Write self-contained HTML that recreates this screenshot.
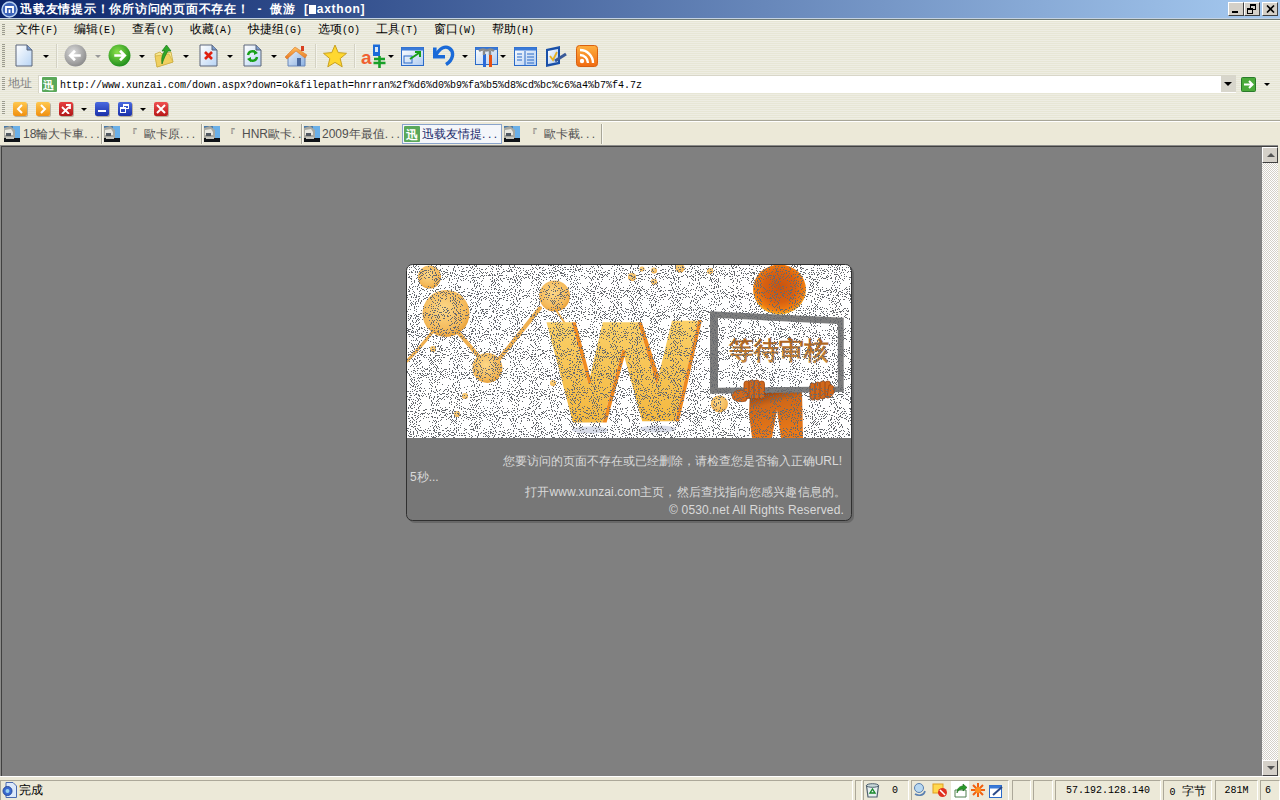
<!DOCTYPE html>
<html><head><meta charset="utf-8">
<style>
*{margin:0;padding:0;box-sizing:border-box}
html,body{width:1280px;height:800px;overflow:hidden;background:#808080;font-family:"Liberation Sans",sans-serif;font-size:12px}
.a{position:absolute}
svg{display:block}
#title{left:0;top:0;width:1280px;height:18px;background:linear-gradient(90deg,#0a246a 0%,#a6caf0 100%)}
#ttxt{left:20px;top:2px;color:#fff;font-weight:bold;font-size:12px;line-height:14px;white-space:nowrap;letter-spacing:0.75px;word-spacing:4px}
.wb{top:2px;width:16px;height:14px;background:#d4d0c8;border-top:1px solid #fff;border-left:1px solid #fff;border-right:1px solid #404040;border-bottom:1px solid #404040}
#bars{left:0;top:18px;width:1280px;height:103px;background:repeating-linear-gradient(180deg,#e7e6d5 0px,#e7e6d5 1px,#eeede3 1px,#eeede3 2px)}
.m{top:22px;font-size:12px;line-height:15px;color:#000;white-space:nowrap}
.m span{font-family:"Liberation Mono",monospace;font-size:10px}
.grip{left:2px;width:3px;background:repeating-linear-gradient(180deg,#9c9c90 0,#9c9c90 1px,transparent 1px,transparent 2px)}
.dd{width:0;height:0;border-left:3px solid transparent;border-right:3px solid transparent;border-top:3px solid #000}
.vsep{width:2px;background:linear-gradient(90deg,#d4d2c4 50%,#f4f4ec 50%)}
#tabs{left:0;top:120px;width:1280px;height:25px;background:#ece9d8;border-top:1px solid #a8a698}
#tabs2{left:0;top:121px;width:1280px;height:1px;background:#fff}
.tab{top:125px;height:18px;font-size:12px;line-height:18px;color:#505050;white-space:nowrap}
.tico{top:126px;width:16px;height:16px}
.tsep{top:124px;width:2px;height:20px;border-left:1px solid #a8a698;border-right:1px solid #f8f8f0}
#content{left:0;top:145px;width:1280px;height:631px;background:#808080;border-top:1px solid #404040;border-left:1px solid #404040}
#status{left:0;top:776px;width:1280px;height:24px;background:#ece9d8;border-top:1px solid #fff}
.sp{top:780px;height:20px;border-top:1px solid #aca899;border-left:1px solid #aca899;border-right:1px solid #fff;font-size:12px;line-height:20px;color:#000;text-align:center;white-space:nowrap}
#addr{left:38px;top:75px;width:1198px;height:18px;background:#fff;border-top:1px solid #d8d6c8;border-left:1px solid #d8d6c8}
#url{left:60px;top:79px;font-family:"Liberation Mono",monospace;font-size:10px;line-height:14px;color:#000;white-space:nowrap}
.dt{font-size:12px;line-height:15px;color:#dadada;white-space:nowrap}
</style></head><body>
<svg width="0" height="0" style="position:absolute"><defs><linearGradient id="wf" x1="0" y1="0" x2="1" y2="1"><stop offset="0" stop-color="#ffffff"/><stop offset="1" stop-color="#b0ccf0"/></linearGradient></defs></svg>
<div id="title" class="a"></div>
<svg class="a" style="left:1px;top:1px" width="17" height="17" viewBox="0 0 17 17"><circle cx="8.5" cy="8.5" r="7.5" fill="#3a62b8" stroke="#b8d0f0" stroke-width="1.5"/><path d="M5 12V6h7v6M8.5 12V8.5" fill="none" stroke="#fff" stroke-width="1.8"/></svg>
<div id="ttxt" class="a">迅载友情提示！你所访问的页面不存在！ - 傲游 [<span style="display:inline-block;width:7px;height:9px;background:#fff;vertical-align:-1px;margin-right:1px"></span>axthon]</div>
<div class="a wb" style="left:1228px"><div class="a" style="left:3px;top:8px;width:6px;height:2px;background:#000"></div></div>
<div class="a wb" style="left:1244px"><div class="a" style="left:5px;top:1px;width:6px;height:6px;border:1px solid #000;border-top-width:2px"></div><div class="a" style="left:2px;top:5px;width:6px;height:6px;border:1px solid #000;border-top-width:2px;background:#d4d0c8"></div></div>
<div class="a wb" style="left:1262px"><svg class="a" style="left:3px;top:2px" width="9" height="8"><path d="M1 0.5L8 7.5M8 0.5L1 7.5" stroke="#000" stroke-width="1.6"/></svg></div>
<div class="a" style="left:0;top:18px;width:1280px;height:1px;background:#c4d2e2"></div>
<div class="a" style="left:0;top:19px;width:1280px;height:1px;background:#707c76"></div>
<div id="bars" class="a" style="top:20px;height:100px;border-top:1px solid #fafaf0"></div>

<!-- menu -->
<div class="a grip" style="top:24px;height:12px"></div>
<div class="a m" style="left:16px">文件<span>(F)</span></div>
<div class="a m" style="left:74px">编辑<span>(E)</span></div>
<div class="a m" style="left:132px">查看<span>(V)</span></div>
<div class="a m" style="left:190px">收藏<span>(A)</span></div>
<div class="a m" style="left:248px">快捷组<span>(G)</span></div>
<div class="a m" style="left:318px">选项<span>(O)</span></div>
<div class="a m" style="left:376px">工具<span>(T)</span></div>
<div class="a m" style="left:434px">窗口<span>(W)</span></div>
<div class="a m" style="left:492px">帮助<span>(H)</span></div>

<!-- toolbar -->
<div class="a grip" style="top:44px;height:24px"></div>
<svg class="a" style="left:15px;top:44px" width="18" height="23" viewBox="0 0 18 23"><defs><linearGradient id="pg" x1="0" y1="0" x2="1" y2="1"><stop offset="0" stop-color="#fff"/><stop offset="1" stop-color="#b8d4f4"/></linearGradient></defs><path d="M1 1H12L17 6V22H1Z" fill="url(#pg)" stroke="#5a6478" stroke-width="1"/><path d="M12 1V6H17" fill="#7a9acc" stroke="#5a6478"/></svg>
<div class="a dd" style="left:43px;top:55px"></div>
<div class="a vsep" style="left:56px;top:44px;height:24px"></div>
<svg class="a" style="left:64px;top:44px" width="23" height="23" viewBox="0 0 22 22"><defs><radialGradient id="gb" cx="0.4" cy="0.35" r="0.7"><stop offset="0" stop-color="#dcdcdc"/><stop offset="1" stop-color="#888"/></radialGradient></defs><circle cx="11" cy="11" r="10.5" fill="url(#gb)"/><path d="M16 11H7M10.5 6.5L6 11L10.5 15.5" fill="none" stroke="#fff" stroke-width="2.6"/></svg>
<div class="a dd" style="left:95px;top:55px;border-top-color:#999"></div>
<svg class="a" style="left:108px;top:44px" width="23" height="23" viewBox="0 0 22 22"><defs><radialGradient id="gg" cx="0.4" cy="0.35" r="0.7"><stop offset="0" stop-color="#8ae04a"/><stop offset="1" stop-color="#1a8a1a"/></radialGradient></defs><circle cx="11" cy="11" r="10.5" fill="url(#gg)"/><path d="M6 11H15M11.5 6.5L16 11L11.5 15.5" fill="none" stroke="#fff" stroke-width="2.6"/></svg>
<div class="a dd" style="left:139px;top:55px"></div>
<svg class="a" style="left:154px;top:44px" width="20" height="24" viewBox="0 0 20 24"><path d="M1 10L6 8L8 10L17 8L19 18L3 23Z" fill="#f8e890" stroke="#c8a83a" stroke-width="0.8"/><path d="M3 23L1 12L15 10L19 18Z" fill="#f0d060" stroke="#c8a83a" stroke-width="0.6"/><path d="M8 20C7 13 9 9 11 7H8L12.5 1L17 7H14C12 10 10 14 8 20Z" fill="#30a828" stroke="#187818" stroke-width="0.7"/></svg>
<div class="a dd" style="left:183px;top:55px"></div>
<svg class="a" style="left:199px;top:44px" width="19" height="23" viewBox="0 0 19 23"><path d="M1 1H13L18 6V22H1Z" fill="url(#pg)" stroke="#5a6478"/><path d="M13 1V6H18" fill="#7a9acc" stroke="#5a6478"/><path d="M6 8L13 15M13 8L6 15" stroke="#e02010" stroke-width="2.6"/></svg>
<div class="a dd" style="left:227px;top:55px"></div>
<svg class="a" style="left:243px;top:44px" width="19" height="23" viewBox="0 0 19 23"><path d="M1 1H13L18 6V22H1Z" fill="url(#pg)" stroke="#5a6478"/><path d="M13 1V6H18" fill="#7a9acc" stroke="#5a6478"/><path d="M5 11A4.5 4.5 0 0 1 13 9M14 13A4.5 4.5 0 0 1 6 15" fill="none" stroke="#18a018" stroke-width="2.4"/><path d="M11 6L15 9L11 11Z M8 13L4 15L8 18Z" fill="#18a018"/></svg>
<div class="a dd" style="left:271px;top:55px"></div>
<svg class="a" style="left:284px;top:44px" width="24" height="24" viewBox="0 0 24 24"><defs><linearGradient id="hb" x1="0" y1="0" x2="1" y2="1"><stop offset="0" stop-color="#eef4fc"/><stop offset="1" stop-color="#8ab0e0"/></linearGradient><linearGradient id="hr" x1="0" y1="0" x2="0" y2="1"><stop offset="0" stop-color="#ffc060"/><stop offset="1" stop-color="#e87820"/></linearGradient></defs><path d="M4 12L13 5L21 12V22H4Z" fill="url(#hb)" stroke="#6a88b8"/><path d="M1 13L11 3L23 11L21 14L12 7L3 15Z" fill="url(#hr)" stroke="#d8782a" stroke-width="0.6"/><rect x="17" y="2" width="3" height="5" fill="#d84020"/><rect x="13" y="14" width="4" height="8" fill="#4a6aa0"/></svg>
<div class="a vsep" style="left:315px;top:44px;height:24px"></div>
<svg class="a" style="left:322px;top:44px" width="26" height="24" viewBox="0 0 26 24"><path d="M13 1L16.2 8.6L24.5 9.3L18.2 14.6L20.2 22.8L13 18.4L5.8 22.8L7.8 14.6L1.5 9.3L9.8 8.6Z" fill="#ffd830" stroke="#c8a020" stroke-width="1"/></svg>
<div class="a vsep" style="left:354px;top:44px;height:24px"></div>
<svg class="a" style="left:361px;top:44px" width="25" height="25" viewBox="0 0 25 25"><path d="M12 0.5H19V12H12Z" fill="#1a6ad8"/><rect x="14" y="3" width="3" height="5" fill="#d8e8f8"/><text x="0" y="20" font-family="Liberation Sans" font-weight="bold" font-size="19" fill="#f06030">a</text><path d="M13 15H24M18.5 12V24M12.5 19H24.5" stroke="#18a028" stroke-width="2.6"/></svg>
<div class="a dd" style="left:388px;top:55px"></div>
<svg class="a" style="left:401px;top:47px" width="23" height="19" viewBox="0 0 23 19"><rect x="0.5" y="0.5" width="22" height="18" fill="url(#wf)" stroke="#2a6ac8"/><rect x="0.5" y="0.5" width="22" height="3" fill="#3a7ad8"/><rect x="3" y="9" width="8" height="7" fill="none" stroke="#2a6ac8"/><path d="M9 12L18 6M14 5H19V10" fill="none" stroke="#18a018" stroke-width="2"/></svg>
<svg class="a" style="left:432px;top:45px" width="23" height="22" viewBox="0 0 23 22"><path d="M4 10C8 3 13 1 17 3C23 7 21 15 14 19.5" fill="none" stroke="#1a6ad8" stroke-width="3.4"/><path d="M1 2.5H4.6V10H13V13.5H1Z" fill="#1a6ad8"/></svg>
<div class="a dd" style="left:462px;top:55px"></div>
<svg class="a" style="left:475px;top:46px" width="23" height="21" viewBox="0 0 23 21"><rect x="0.5" y="1.5" width="22" height="17" fill="url(#wf)" stroke="#2a6ac8"/><rect x="0.5" y="1.5" width="22" height="2.5" fill="#3a7ad8"/><rect x="8" y="8" width="3" height="13" fill="#2a6ad8"/><rect x="14" y="9" width="3" height="12" fill="#e85010"/><path d="M4 5Q8 2 12 5M12 5Q15 2 19 5" stroke="#8a8a8a" stroke-width="2.4" fill="none"/><path d="M9 5V9M15 5V9" stroke="#8a8a8a" stroke-width="2.4"/></svg>
<div class="a dd" style="left:500px;top:55px"></div>
<svg class="a" style="left:514px;top:47px" width="23" height="19" viewBox="0 0 23 19"><rect x="0.5" y="0.5" width="22" height="18" fill="url(#wf)" stroke="#2a6ac8"/><rect x="0.5" y="0.5" width="22" height="3" fill="#3a7ad8"/><path d="M11 4V18" stroke="#2a6ac8"/><path d="M3 7H8M3 10H8M3 13H8M13 7H20M13 10H20M13 13H20M13 16H20" stroke="#2a6ac8" stroke-width="1.2"/></svg>
<svg class="a" style="left:545px;top:44px" width="23" height="24" viewBox="0 0 23 24"><path d="M1 5L15 2V20L1 23Z" fill="#1a50a8"/><path d="M3 7L13 5V18L3 20Z" fill="url(#wf)"/><path d="M5 12L8 16L12 8" fill="none" stroke="#e8b020" stroke-width="1.8"/><path d="M10 17L21 10" stroke="#3a5a98" stroke-width="3"/></svg>
<svg class="a" style="left:576px;top:45px" width="22" height="22" viewBox="0 0 22 22"><defs><linearGradient id="rs" x1="0" y1="0" x2="0" y2="1"><stop offset="0" stop-color="#ffb040"/><stop offset="1" stop-color="#f06a10"/></linearGradient></defs><rect x="0.5" y="0.5" width="21" height="21" rx="3" fill="url(#rs)" stroke="#d86010"/><circle cx="6" cy="16" r="2.2" fill="#fff"/><path d="M4 10A8 8 0 0 1 12 18M4 5A13 13 0 0 1 17 18" fill="none" stroke="#fff" stroke-width="2.4"/></svg>

<!-- address bar -->
<div class="a grip" style="top:77px;height:14px"></div>
<div class="a" style="left:8px;top:76px;font-size:12px;line-height:15px;color:#808080">地址</div>
<div id="addr" class="a"></div>
<div class="a" style="left:1221px;top:76px;width:15px;height:16px;background:#d8d6cc"><div class="a dd" style="left:3px;top:6px;border-left-width:4px;border-right-width:4px;border-top-width:4px"></div></div>
<svg class="a" style="left:42px;top:77px" width="15" height="15" viewBox="0 0 15 15"><rect width="15" height="15" rx="1" fill="#5aa85a"/><text x="1" y="12" font-size="11" font-weight="bold" fill="#fff">迅</text></svg>
<div id="url" class="a">http://www.xunzai.com/down.aspx?down=ok&amp;filepath=hnrran%2f%d6%d0%b9%fa%b5%d8%cd%bc%c6%a4%b7%f4.7z</div>
<svg class="a" style="left:1241px;top:77px" width="15" height="15" viewBox="0 0 15 15"><rect x="0.5" y="0.5" width="14" height="14" rx="1" fill="#4aaa3a" stroke="#2a7a2a"/><path d="M3 7.5H11M8 4L11.5 7.5L8 11" fill="none" stroke="#fff" stroke-width="2"/></svg>
<div class="a dd" style="left:1264px;top:83px"></div>

<!-- toolbar 2 -->
<div class="a grip" style="top:101px;height:14px"></div>
<div class="a" style="left:13px;top:102px;width:14px;height:14px;background:linear-gradient(#ffc850,#f09010);border-radius:2px;box-shadow:1px 1px 0 #b8b0a0"><svg class="a" style="left:3px;top:2px" width="8" height="10"><path d="M6 1L2 5L6 9" fill="none" stroke="#fff" stroke-width="2"/></svg></div>
<div class="a" style="left:36px;top:102px;width:14px;height:14px;background:linear-gradient(#ffc850,#f09010);border-radius:2px;box-shadow:1px 1px 0 #b8b0a0"><svg class="a" style="left:3px;top:2px" width="8" height="10"><path d="M2 1L6 5L2 9" fill="none" stroke="#fff" stroke-width="2"/></svg></div>
<div class="a" style="left:59px;top:102px;width:14px;height:14px;background:linear-gradient(#e84040,#b01818);border-radius:2px;box-shadow:1px 1px 0 #b8b0a0"><svg class="a" style="left:2px;top:2px" width="10" height="10"><path d="M1 3L8 10M8 3L1 10M5 1H9V5" fill="none" stroke="#fff" stroke-width="1.8"/></svg></div>
<div class="a dd" style="left:81px;top:108px"></div>
<div class="a" style="left:95px;top:102px;width:14px;height:14px;background:linear-gradient(#4a6ae0,#1a30a8);border-radius:2px;box-shadow:1px 1px 0 #b8b0a0"><div class="a" style="left:3px;top:8px;width:8px;height:2px;background:#fff"></div></div>
<div class="a" style="left:118px;top:102px;width:14px;height:14px;background:linear-gradient(#4a6ae0,#1a30a8);border-radius:2px;box-shadow:1px 1px 0 #b8b0a0"><div class="a" style="left:5px;top:2px;width:6px;height:5px;border:1px solid #fff;border-top-width:2px"></div><div class="a" style="left:2px;top:5px;width:6px;height:6px;border:1px solid #fff;border-top-width:2px"></div></div>
<div class="a dd" style="left:140px;top:108px"></div>
<div class="a" style="left:154px;top:102px;width:14px;height:14px;background:linear-gradient(#f05050,#b81818);border-radius:2px;box-shadow:1px 1px 0 #b8b0a0"><svg class="a" style="left:2px;top:2px" width="10" height="10"><path d="M1 1L9 9M9 1L1 9" stroke="#fff" stroke-width="2"/></svg></div>

<!-- tabs -->
<div id="tabs" class="a"></div>
<div id="tabs2" class="a"></div>
<svg class="a tico" style="left:4px" width="16" height="16" viewBox="0 0 16 16"><defs></defs><rect width="16" height="16" fill="#4a7aa8"/><rect x="9" y="0" width="7" height="12" fill="#6ab0e8"/><path d="M0 2L6 0L11 4V12H0Z" fill="#a8a8a0"/><path d="M1 4L7 3L9 6V9H1Z" fill="#e8e8e0"/><rect x="2" y="7" width="5" height="3" fill="#505860"/><rect x="0" y="12" width="16" height="4" fill="#101418"/><rect x="2" y="11" width="8" height="2" fill="#c8c8c0"/></svg>
<div class="a tab" style="left:23px">18輪大卡車<span style="letter-spacing:2.6px">...</span></div>
<svg class="a tico" style="left:104px" width="16" height="16" viewBox="0 0 16 16"><defs></defs><rect width="16" height="16" fill="#4a7aa8"/><rect x="9" y="0" width="7" height="12" fill="#6ab0e8"/><path d="M0 2L6 0L11 4V12H0Z" fill="#a8a8a0"/><path d="M1 4L7 3L9 6V9H1Z" fill="#e8e8e0"/><rect x="2" y="7" width="5" height="3" fill="#505860"/><rect x="0" y="12" width="16" height="4" fill="#101418"/><rect x="2" y="11" width="8" height="2" fill="#c8c8c0"/></svg>
<div class="a tab" style="left:126px">『<span style="margin-left:6px"></span>歐卡原<span style="letter-spacing:2.6px">...</span></div>
<svg class="a tico" style="left:204px" width="16" height="16" viewBox="0 0 16 16"><defs></defs><rect width="16" height="16" fill="#4a7aa8"/><rect x="9" y="0" width="7" height="12" fill="#6ab0e8"/><path d="M0 2L6 0L11 4V12H0Z" fill="#a8a8a0"/><path d="M1 4L7 3L9 6V9H1Z" fill="#e8e8e0"/><rect x="2" y="7" width="5" height="3" fill="#505860"/><rect x="0" y="12" width="16" height="4" fill="#101418"/><rect x="2" y="11" width="8" height="2" fill="#c8c8c0"/></svg>
<div class="a tab" style="left:224px">『<span style="margin-left:6px"></span>HNR歐卡<span style="letter-spacing:2.6px">...</span></div>
<svg class="a tico" style="left:304px" width="16" height="16" viewBox="0 0 16 16"><defs></defs><rect width="16" height="16" fill="#4a7aa8"/><rect x="9" y="0" width="7" height="12" fill="#6ab0e8"/><path d="M0 2L6 0L11 4V12H0Z" fill="#a8a8a0"/><path d="M1 4L7 3L9 6V9H1Z" fill="#e8e8e0"/><rect x="2" y="7" width="5" height="3" fill="#505860"/><rect x="0" y="12" width="16" height="4" fill="#101418"/><rect x="2" y="11" width="8" height="2" fill="#c8c8c0"/></svg>
<div class="a tab" style="left:322px">2009年最值<span style="letter-spacing:2.6px">...</span></div>
<div class="a" style="left:402px;top:124px;width:100px;height:20px;background:#f4f6fa;border:1px solid #8aa4cc"></div>
<svg class="a tico" style="left:404px" width="16" height="16" viewBox="0 0 16 16"><rect width="16" height="16" rx="1" fill="#5aa85a"/><text x="2" y="13" font-size="12" font-weight="bold" fill="#fff">迅</text></svg>
<div class="a tab" style="left:422px;color:#1a2a6a">迅载友情提<span style="letter-spacing:2.6px">...</span></div>
<svg class="a tico" style="left:504px" width="16" height="16" viewBox="0 0 16 16"><defs></defs><rect width="16" height="16" fill="#4a7aa8"/><rect x="9" y="0" width="7" height="12" fill="#6ab0e8"/><path d="M0 2L6 0L11 4V12H0Z" fill="#a8a8a0"/><path d="M1 4L7 3L9 6V9H1Z" fill="#e8e8e0"/><rect x="2" y="7" width="5" height="3" fill="#505860"/><rect x="0" y="12" width="16" height="4" fill="#101418"/><rect x="2" y="11" width="8" height="2" fill="#c8c8c0"/></svg>
<div class="a tab" style="left:526px">『<span style="margin-left:6px"></span>歐卡截<span style="letter-spacing:2.6px">...</span></div>
<div class="a tsep" style="left:101px"></div>
<div class="a tsep" style="left:201px"></div>
<div class="a tsep" style="left:301px"></div>
<div class="a tsep" style="left:601px"></div>

<div class="a" style="left:0;top:145px;width:1278px;height:631px;background:#808080;border-top:1px solid #8c8c8a;border-left:1px solid #8c8c8a"></div>
<div class="a" style="left:1px;top:146px;width:1277px;height:630px;border-top:1px solid #404040;border-left:1px solid #404040"></div>
<div class="a" style="left:1278px;top:145px;width:2px;height:633px;background:#ece9d8"></div>
<div class="a" style="left:1262px;top:147px;width:16px;height:629px;background-color:#fff;background-image:linear-gradient(45deg,#d4d0c8 25%,transparent 25%,transparent 75%,#d4d0c8 75%),linear-gradient(45deg,#d4d0c8 25%,transparent 25%,transparent 75%,#d4d0c8 75%);background-size:2px 2px;background-position:0 0,1px 1px"></div>
<div class="a" style="left:1262px;top:147px;width:16px;height:16px;background:#d4d0c8;border-top:1px solid #fff;border-left:1px solid #fff;border-right:1px solid #404040;border-bottom:1px solid #404040"><div class="a" style="left:4px;top:5px;width:0;height:0;border-left:4px solid transparent;border-right:4px solid transparent;border-bottom:4px solid #555"></div></div>
<div class="a" style="left:1262px;top:760px;width:16px;height:16px;background:#d4d0c8;border-top:1px solid #fff;border-left:1px solid #fff;border-right:1px solid #404040;border-bottom:1px solid #404040"><div class="a" style="left:4px;top:5px;width:0;height:0;border-left:4px solid transparent;border-right:4px solid transparent;border-top:4px solid #555"></div></div>
<div class="a" style="left:408px;top:266px;width:446px;height:257px;border-radius:7px;background:rgba(50,50,50,0.3)"></div>
<svg class="a" style="left:406px;top:264px" width="446" height="257" viewBox="0 0 446 257">
<defs>
<clipPath id="dc"><rect x="0.5" y="0.5" width="445" height="256" rx="6"/></clipPath>
<radialGradient id="orb" cx="0.45" cy="0.4" r="0.6"><stop offset="0" stop-color="#fcd888"/><stop offset="0.8" stop-color="#f4b858"/><stop offset="1" stop-color="#e8a038"/></radialGradient>
<radialGradient id="head" cx="0.5" cy="0.45" r="0.55"><stop offset="0" stop-color="#c85410"/><stop offset="0.55" stop-color="#d86010"/><stop offset="0.85" stop-color="#f07c10"/><stop offset="1" stop-color="#f4b028"/></radialGradient>
<linearGradient id="wg" x1="0" y1="0" x2="0" y2="1"><stop offset="0" stop-color="#fad068"/><stop offset="1" stop-color="#f4b840"/></linearGradient>
<linearGradient id="leg" x1="0" y1="0" x2="0.3" y2="1"><stop offset="0" stop-color="#803810"/><stop offset="0.35" stop-color="#d06818"/><stop offset="1" stop-color="#e87818"/></linearGradient>
<linearGradient id="txt" x1="0" y1="0" x2="0" y2="1"><stop offset="0" stop-color="#a85a18"/><stop offset="1" stop-color="#c88a40"/></linearGradient>
<filter id="nz" x="0" y="0" width="446" height="174" filterUnits="userSpaceOnUse" color-interpolation-filters="sRGB">
<feTurbulence type="fractalNoise" baseFrequency="0.95" numOctaves="1" seed="7" result="t"/>
<feColorMatrix in="t" type="matrix" values="0 0 0 0 0.40  0 0 0 0 0.41  0 0 0 0 0.43  2 0 0 0 -0.69"/>
<feComponentTransfer><feFuncA type="discrete" tableValues="0 1"/></feComponentTransfer>
</filter>
</defs>
<g clip-path="url(#dc)">
<rect width="446" height="174" fill="#fff"/>
<g stroke="#f0b050" fill="none" stroke-linecap="round">
<path d="M28 66Q14 84 1 97" stroke-width="3"/>
<path d="M50 66Q64 82 74 94" stroke-width="4"/>
<path d="M93 95Q112 72 134 44" stroke-width="4"/>
<path d="M150 46L162 64" stroke-width="2"/>
</g>
<g fill="url(#orb)">
<circle cx="23.5" cy="13" r="11.5"/>
<circle cx="40" cy="49.5" r="23.5"/>
<circle cx="81.4" cy="104" r="15"/>
<circle cx="148.6" cy="32" r="15.4"/>
<circle cx="59" cy="132" r="3"/><circle cx="51" cy="150" r="3"/><circle cx="27" cy="85" r="3"/><circle cx="147" cy="119" r="3"/>
<circle cx="226" cy="13" r="4"/><circle cx="236" cy="5" r="2.5"/><circle cx="248" cy="6.5" r="3"/><circle cx="248" cy="17.8" r="3"/><circle cx="274" cy="4" r="4.5"/><circle cx="304" cy="7" r="3"/>
</g>
<path d="M140.5 58.3H165.8L182.3 119.9L196.7 58.3H231.8L250.5 119.9L266 56.8H292.3L269.2 157.3H236.2L216.4 85.8L196.6 158.4H166.9Z" fill="url(#wg)"/>
<g fill="#f08a20">
<path d="M165.8 58.3L169.8 58.3L185.5 118L182.3 119.9Z"/>
<path d="M216.4 85.8L220 87L200.6 158.4L196.6 158.4Z"/>
<path d="M231.8 58.3L235.8 58.3L253 112L250.5 119.9Z"/>
<path d="M292.3 56L296 56L273 157.3L269.2 157.3Z"/>
</g>
<ellipse cx="184" cy="166" rx="18" ry="3.5" fill="#d8dce8"/>
<ellipse cx="252" cy="165" rx="18" ry="3.5" fill="#d8dce8"/>
<ellipse cx="373.5" cy="25.5" rx="26.5" ry="25" fill="url(#head)"/>
<path d="M344 128H396L397 174H375L371 146L366 174H346L343 150Z" fill="url(#leg)"/>
<circle cx="313.4" cy="140" r="8.5" fill="url(#orb)"/>
<path d="M304 47.3L437.7 53.8L437.7 128L304 129.8Z" fill="#7c7c7c"/>
<path d="M312 54L431.8 60L431.8 122.5L312 123.8Z" fill="#fff"/>
<text x="372.5" y="94.5" text-anchor="middle" font-family="Liberation Sans" font-weight="bold" font-size="25" fill="url(#txt)">等待审核</text>
<g fill="#d0681c" stroke="#9a4510" stroke-width="0.8">
<rect x="338" y="117" width="5.5" height="18" rx="2.7"/><rect x="343" y="116" width="5.5" height="19" rx="2.7"/><rect x="348" y="116" width="5.5" height="19" rx="2.7"/><rect x="353" y="117" width="5.5" height="18" rx="2.7"/>
<path d="M326 131Q328 126 336 126L342 130L340 137Q332 139 327 135Z"/>
<rect x="404" y="119" width="5.5" height="17" rx="2.7"/><rect x="409" y="118" width="5.5" height="18" rx="2.7"/><rect x="414" y="117" width="5.5" height="18" rx="2.7"/><rect x="419" y="117" width="5.5" height="17" rx="2.7"/>
<path d="M423 121Q429 120 428 128Q426 134 421 133Z"/>
</g>
<rect y="174" width="446" height="83" fill="#777"/>
<rect width="446" height="174" filter="url(#nz)"/>
</g>
<rect x="0.5" y="0.5" width="445" height="256" rx="6" fill="none" stroke="#303030" stroke-width="1"/>
</svg>
<div class="a dt" style="left:491px;top:454px;width:351px;text-align:right">您要访问的页面不存在或已经删除，请检查您是否输入正确URL!</div>
<div class="a dt" style="left:410px;top:470px">5秒...</div>
<div class="a dt" style="left:491px;top:485px;width:355px;text-align:right;letter-spacing:0.1px">打开www.xunzai.com主页，然后查找指向您感兴趣信息的。</div>
<div class="a dt" style="left:600px;top:503px;width:244px;text-align:right;letter-spacing:0.15px">© 0530.net All Rights Reserved.</div>

<div id="status" class="a"></div>
<div class="a sp" style="left:0;width:853px;text-align:left"></div>
<svg class="a" style="left:2px;top:782px" width="15" height="16" viewBox="0 0 15 16"><path d="M4 0.5H11L14.5 4V15.5H4Z" fill="#dce8fa" stroke="#4a6ab0"/><circle cx="5.5" cy="9" r="4.5" fill="#3a6ad0" stroke="#2a4a9a"/><circle cx="5.5" cy="9" r="2" fill="#9ad0f0"/></svg>
<div class="a" style="left:19px;top:781px;font-size:12px;line-height:18px;color:#000">完成</div>
<div class="a sp" style="left:855px;width:7px"></div>
<div class="a sp" style="left:863px;width:46px"></div>
<svg class="a" style="left:865px;top:783px" width="15" height="15" viewBox="0 0 15 15"><path d="M1.5 2.5H13.5L12 14H3Z" fill="#e8f0f0" stroke="#506070" stroke-width="1.2"/><ellipse cx="7.5" cy="2.5" rx="6" ry="1.8" fill="#c8d8d8" stroke="#506070"/><path d="M7.5 6L10 10H5Z" fill="none" stroke="#18882a" stroke-width="1.4"/></svg>
<div class="a" style="left:892px;top:782px;font-family:'Liberation Mono',monospace;font-size:10px;line-height:18px;color:#000">0</div>
<div class="a sp" style="left:911px;width:98px"></div>
<svg class="a" style="left:913px;top:783px" width="14" height="14" viewBox="0 0 14 14"><circle cx="6" cy="5" r="4.5" fill="#b8d8f0" stroke="#5a80b0"/><path d="M2 11C5 13 11 13 12 8" fill="none" stroke="#5a80b0" stroke-width="1.6"/></svg>
<svg class="a" style="left:932px;top:783px" width="16" height="15" viewBox="0 0 16 15"><rect x="1" y="1" width="10" height="9" fill="#ffd850" stroke="#e0a020"/><circle cx="10.5" cy="9.5" r="4.5" fill="#e03020"/><path d="M8 7L13 12" stroke="#fff" stroke-width="1.6"/></svg>
<div class="a" style="left:951px;top:781px;width:18px;height:19px;background:#fff"></div>
<svg class="a" style="left:952px;top:783px" width="16" height="15" viewBox="0 0 16 15"><path d="M3 7H14V14H3Z" fill="#fff" stroke="#508050"/><path d="M5 10C5 5 8 3 11 3V1L15 4.5L11 8V6C8 6 6 7 5 10Z" fill="#2a9a2a" stroke="#1a6a1a" stroke-width="0.6"/></svg>
<svg class="a" style="left:971px;top:783px" width="14" height="14" viewBox="0 0 14 14"><g stroke="#f06010" stroke-width="2"><path d="M7 0V14M0 7H14M2 2L12 12M12 2L2 12"/></g><circle cx="7" cy="7" r="3" fill="#ff9020"/></svg>
<svg class="a" style="left:989px;top:783px" width="15" height="15" viewBox="0 0 15 15"><rect x="0.5" y="2.5" width="12" height="12" fill="#fff" stroke="#2a6ac8"/><rect x="0.5" y="2.5" width="12" height="3" fill="#3a7ad8"/><path d="M4 12L13 4" stroke="#2a4a88" stroke-width="2"/></svg>
<div class="a sp" style="left:1012px;width:19px"></div>
<div class="a sp" style="left:1033px;width:20px"></div>
<div class="a sp" style="left:1055px;width:106px;font-family:'Liberation Mono',monospace;font-size:10px">57.192.128.140</div>
<div class="a sp" style="left:1163px;width:49px"><span style="font-family:'Liberation Mono',monospace;font-size:10px">0 </span>字节</div>
<div class="a sp" style="left:1215px;width:43px;font-family:'Liberation Mono',monospace;font-size:10px">281M</div>
<div class="a sp" style="left:1260px;width:20px;font-family:'Liberation Mono',monospace;font-size:10px;text-align:left;padding-left:4px">6</div>
</body></html>
